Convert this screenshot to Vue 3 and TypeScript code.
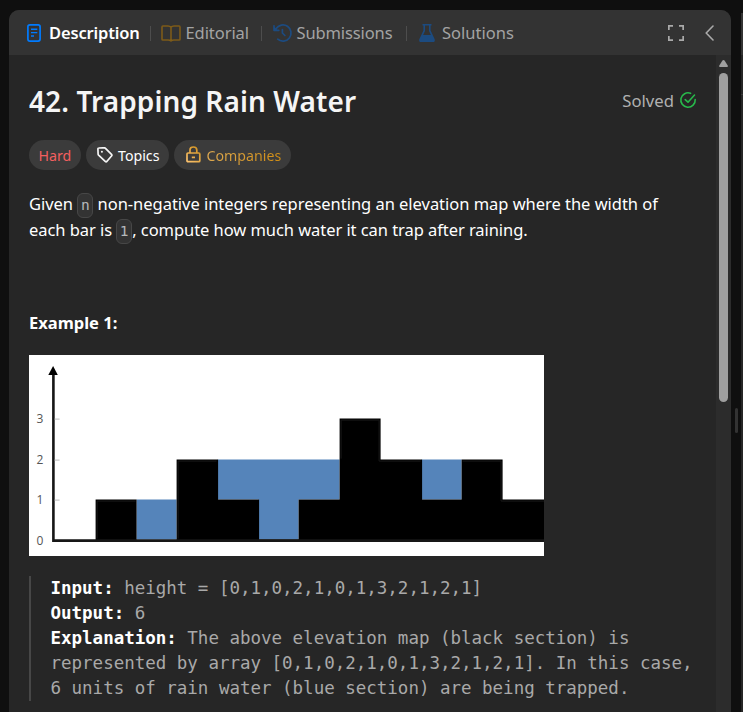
<script setup lang="ts">
interface Tick {
  label: string
  y: number
}

const ticks: Tick[] = [
  { label: '3', y: 64 },
  { label: '2', y: 105 },
  { label: '1', y: 145 },
  { label: '0', y: 186 },
]
</script>

<template>
  <div class="page">
    <section class="panel">
      <header class="tabs">
        <div class="tab active t-desc">
          <svg class="ico" width="14" height="18" viewBox="0 0 14 18" fill="none" stroke="#007bff" stroke-width="1.7">
            <rect x="0.9" y="0.9" width="12.2" height="16.2" rx="2" />
            <path d="M4 5.3h6.3M4 8.6h6.3M4 12h3" stroke-width="1.4" />
          </svg>
          <span class="label">Description</span>
        </div>
        <i class="sep"></i>
        <div class="tab t-edit">
          <svg class="ico" width="20" height="17" viewBox="0 0 20 17" fill="none" stroke="#7d5b19" stroke-width="1.6" stroke-linejoin="round">
            <path d="M10 2.300C9.300 1.400 8.300 1 7 1H1.900Q1 1 1 1.900V14.300Q1 15 1.900 15H7Q9 15 10 16Q11 15 13 15H18.100Q19 15 19 14.300V1.900Q19 1 18.100 1H13C11.700 1 10.700 1.400 10 2.300ZM10 2.300V15.500" />
          </svg>
          <span class="label">Editorial</span>
        </div>
        <i class="sep"></i>
        <div class="tab t-sub">
          <svg class="ico" width="19" height="18" viewBox="0 0 19 18" fill="none" stroke="#1c4b80" stroke-width="1.7" stroke-linecap="round" stroke-linejoin="round">
            <path d="M3 4.800A8.100 8.100 0 1 1 4.700 15.200" />
            <path d="M1 1.800V6.300H5.800" />
            <path d="M1 2.600L4.500 6.100H1Z" fill="#1c4b80" stroke="none" />
            <path d="M9.400 5.500V9L11.900 11.500" />
          </svg>
          <span class="label">Submissions</span>
        </div>
        <i class="sep"></i>
        <div class="tab t-sol">
          <svg class="ico" width="16" height="18" viewBox="0 0 16 18">
            <path d="M3.500 0H12.500V1.600H11.600V6.600L15.700 15.200Q16.400 18 14 18H2Q-0.400 18 0.300 15.200L4.400 6.600V1.600H3.500ZM6 1.600V7L4.100 11H11.900L10 7V1.600Z" fill="#1c4b80" fill-rule="evenodd" />
          </svg>
          <span class="label">Solutions</span>
        </div>
        <div class="actions">
          <svg width="16" height="16" viewBox="0 0 16 16" fill="none" stroke="#aaa" stroke-width="1.7">
            <path d="M.85 5V.85H5M11 .85h4.150V5M15.150 11v4.150H11M5 15.150H.85V11" />
          </svg>
          <svg width="9" height="16" viewBox="0 0 9 16" fill="none" stroke="#aaa" stroke-width="1.600" stroke-linecap="round" stroke-linejoin="round">
            <path d="M8 1L1.200 8L8 15" />
          </svg>
        </div>
      </header>

      <div class="body">
        <main class="content">
          <div class="heading">
            <h1>42. Trapping Rain Water</h1>
            <div class="solved">
              <span>Solved</span>
              <svg width="16" height="16" viewBox="0 0 16 16" fill="none" stroke="#28b84b" stroke-width="1.600" stroke-linecap="round" stroke-linejoin="round">
                <path d="M10.600 1.300A7.200 7.200 0 1 0 15.200 7.500" />
                <path d="M5.200 7.600L8 10.200L14.500 3" />
              </svg>
            </div>
          </div>

          <div class="pills">
            <span class="pill hard"><span>Hard</span></span>
            <span class="pill topics">
              <svg width="16" height="16" viewBox="0 0 16 16" fill="none" stroke="#f5f5f5" stroke-width="1.700" stroke-linejoin="round">
                <path d="M1.800 1L7.300.8Q8 .8 8.500 1.300L14.500 7.300Q15.300 8.200 14.500 9L10 14.300Q9.100 15.200 8.200 14.300L1.600 8.100Q1.100 7.600 1.100 7L.9 1.800Q.9 1 1.800 1Z" />
                <circle cx="4.900" cy="4.800" r="1.050" fill="#f5f5f5" stroke="none" />
              </svg>
              <span>Topics</span>
            </span>
            <span class="pill companies">
              <svg width="15" height="17" viewBox="0 0 15 17" fill="none" stroke="url(#gold)" stroke-width="1.700">
                <defs>
                  <linearGradient id="gold" gradientUnits="userSpaceOnUse" x1="0" y1="16" x2="15" y2="0">
                    <stop offset="0" stop-color="#ffc673" />
                    <stop offset="1" stop-color="#cb8b15" />
                  </linearGradient>
                </defs>
                <rect x="1" y="7" width="12.800" height="8.700" rx="1" />
                <path d="M4 7V4Q4 1 7.400 1T10.800 4V7M5.800 11.300H9" />
              </svg>
              <span class="gold">Companies</span>
            </span>
          </div>

          <p class="statement">
            <span class="line l1">Given <code>n</code> non-negative integers representing an elevation map where the width of</span>
            <span class="line l2">each bar is <code>1</code>, compute how much water it can trap after raining.</span>
          </p>

          <p class="example">Example 1:</p>

          <svg class="chart" width="515" height="201" viewBox="0 0 515 201">
            <rect width="515" height="201" fill="#fff" />
            <g transform="translate(-0.4 -0.4)">
              <path d="M108 145H148V185H108ZM189 105H311V145H270V185H230V145H189ZM393 105H433V145H393Z" fill="#5584ba" />
              <path d="M67 145H108V186H67ZM148 105H189.500V145H230.500V185H270V145H311V64H352V105H393.500V145H433V105H474V145H516V186H148Z" fill="#000" />
              <path d="M68.500 184V146.500H107M149.500 184V106.500H188M312.500 104V65.500H350.500V106.500H392M434 106.500H472.500V146.500H516" fill="none" stroke="#191919" stroke-width="1" />
              <path d="M24.800 17V186H516" fill="none" stroke="#161616" stroke-width="2.600" />
              <path d="M24.500 11.500L29.200 20.500H19.700Z" fill="#000" />
              <path d="M26 64.500h5M26 105.500h5M26 145.500h5" stroke="#bbb" stroke-width="1" />
            </g>
            <text v-for="t in ticks" :key="t.label" x="7.600" :y="t.y + 4.200" class="tick">{{ t.label }}</text>
          </svg>

          <pre class="quote"><b>Input:</b> height = [0,1,0,2,1,0,1,3,2,1,2,1]
<b>Output:</b> 6
<b>Explanation:</b> The above elevation map (black section) is
represented by array [0,1,0,2,1,0,1,3,2,1,2,1]. In this case,
6 units of rain water (blue section) are being trapped.</pre>
        </main>
        <aside class="scroll">
          <i class="arrow"></i>
          <i class="thumb"></i>
        </aside>
      </div>
    </section>

    <div class="splitter"><i class="grip"></i></div>
    <div class="neighbour"><i class="cap"></i></div>
  </div>
</template>

<style>
body {
  margin: 0;
  background: #0f0f0f;
}
</style>

<style scoped>
.page {
  box-sizing: border-box;
  width: 743px;
  height: 712px;
  padding: 10px 0 0 9px;
  display: flex;
  overflow: hidden;
  background: #0f0f0f;
  color: #f5f5f5;
  font-family: "Noto Sans", "Open Sans", sans-serif;
}
.panel {
  width: 722px;
  height: 702px;
  display: flex;
  flex-direction: column;
  background: #262626;
  border-radius: 10px 10px 0 0;
  overflow: hidden;
}
.tabs {
  height: 45px;
  flex: none;
  display: flex;
  align-items: center;
  background: #333;
  padding-left: 18px;
  font-size: 16.5px;
}
.tab {
  display: flex;
  align-items: center;
  height: 45px;
  padding-top: 1px;
  color: #a3a3a3;
  white-space: nowrap;
  box-sizing: border-box;
}
.ico { flex: none; overflow: visible; }
.label { line-height: 24px; }
.active { color: #fff; font-weight: 600; }
.t-desc { width: 123px; gap: 8px; }
.t-edit { width: 100px; gap: 4.5px; }
.t-sub { width: 133px; gap: 4.500px; }
.t-sol { gap: 7px; }
.t-desc .label { letter-spacing: -0.15px; }
.t-edit .label { letter-spacing: -0.07px; }
.t-sub .label { letter-spacing: -0.12px; }
.sep {
  width: 1px;
  height: 15px;
  margin-top: 1px;
  background: #4d4d4d;
}
.t-edit { margin-left: 10px; }
.t-sub { margin-left: 11px; }
.t-sol { margin-left: 12px; }
.actions {
  display: flex;
  align-items: center;
  gap: 21px;
  margin-left: auto;
  padding: 0 17px 0 0;
}
.body { flex: 1; display: flex; min-height: 0; }
.content { width: 707px; padding-left: 20px; box-sizing: border-box; }
.heading {
  height: 47px;
  margin-top: 24px;
  display: flex;
  justify-content: space-between;
  padding-right: 20px;
}
h1 {
  margin: 0;
  font-size: 28px;
  line-height: 45px;
  font-weight: 600;
  letter-spacing: 0.09px;
  white-space: nowrap;
}
.solved {
  display: flex;
  align-items: center;
  gap: 6px;
  height: 43px;
  font-size: 16.700px;
  color: #b0b0b0;
}
.solved svg { margin-top: -2px; overflow: visible; }
.pills { display: flex; gap: 5px; margin-top: 14px; }
.pill {
  height: 30px;
  box-sizing: border-box;
  border-radius: 15px;
  background: #3b3b3b;
  display: flex;
  align-items: center;
  white-space: nowrap;
  font-size: 14.2px;
  padding-left: 10px;
  padding-top: 1px;
}
.hard { width: 52px; padding-left: 9.500px; color: #f35f5f; }
.topics { width: 83px; gap: 5.500px; padding-left: 10.500px; color: #fff; }
.topics svg { margin-top: -2px; }
.companies { width: 117px; gap: 6px; padding-left: 11.500px; }
.companies svg { margin-top: -2px; }
.gold {
  color: transparent;
  background: linear-gradient(100deg, #dda952, #cf8c12);
  background-clip: text;
  -webkit-background-clip: text;
}
.statement { margin: 21px 0 0; font-size: 16.5px; color: #fff; }
.line { display: block; height: 26px; line-height: 26px; white-space: nowrap; }
.l1 { letter-spacing: -0.03px; }
.l2 { letter-spacing: -0.06px; }
code {
  display: inline-block;
  box-sizing: border-box;
  width: 16px;
  height: 25px;
  border: 1px solid #474747;
  border-radius: 6px;
  background: #333;
  color: #b5b8ba;
  text-align: center;
  vertical-align: top;
  margin-top: 2px;
  font: 14.500px/23px "DejaVu Sans Mono", monospace;
  letter-spacing: 0;
}
.example {
  margin: 67px 0 0;
  font-size: 16.5px;
  line-height: 26px;
  font-weight: 700;
  color: #fff;
}
.chart { display: block; margin-top: 19px; }
.tick { font: 12px "Open Sans", sans-serif; fill: #555; }
.quote {
  margin: 20px 0 0;
  height: 125px;
  padding-left: 19.500px;
  border-left: 2px solid #474747;
  font: 17.5px/25px "DejaVu Sans Mono", monospace;
  letter-spacing: -0.01px;
  color: #a9a9a9;
}
.quote b { color: #fff; }
.scroll {
  width: 15px;
  background: #2c2c2c;
  display: flex;
  flex-direction: column;
  align-items: center;
}
.arrow {
  width: 9px;
  height: 7px;
  margin-top: 5px;
  background: #9f9f9f;
  clip-path: polygon(50% 0, 62% 8%, 100% 85%, 94% 100%, 6% 100%, 0 85%, 38% 8%);
}
.thumb {
  width: 9px;
  height: 329px;
  margin-top: 6px;
  border-radius: 5px;
  background: #9f9f9f;
}
.splitter { width: 10px; display: flex; justify-content: center; }
.grip {
  width: 3px;
  height: 25px;
  margin-top: 398px;
  border-radius: 2px;
  background: #333;
}
.neighbour {
  width: 2px;
  margin-top: 3px;
  background: #262626;
}
.cap {
  display: block;
  height: 42px;
  background: #333;
  border-bottom: 39px solid #262626;
  box-shadow: 0 1px #3a3a3a;
}
</style>
